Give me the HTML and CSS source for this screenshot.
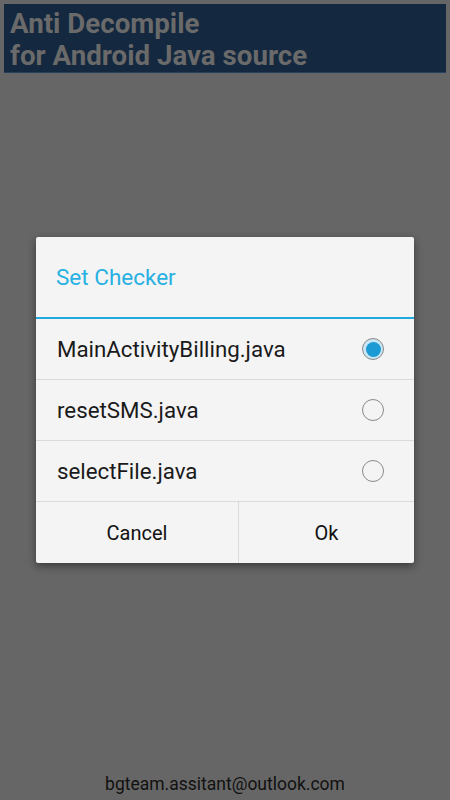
FILE: index.html
```html
<!DOCTYPE html>
<html lang="en">
<head>
    <meta charset="UTF-8">
    <title>Anti Decompile</title>
    <link rel="stylesheet" href="styles.css">
</head>
<body>
    <div class="page">
        <div class="header">
            <div class="header-title">Anti Decompile<br>for Android Java source</div>
        </div>

        <div class="dialog">
            <div class="dialog-title">Set Checker</div>
            <div class="option">
                <span class="option-label">MainActivityBilling.java</span>
                <span class="radio checked"><span class="dot"></span></span>
            </div>
            <div class="option">
                <span class="option-label">resetSMS.java</span>
                <span class="radio"></span>
            </div>
            <div class="option">
                <span class="option-label">selectFile.java</span>
                <span class="radio"></span>
            </div>
            <div class="buttons">
                <button class="btn btn-cancel">Cancel</button>
                <button class="btn btn-ok">Ok</button>
            </div>
        </div>

        <div class="footer">bgteam.assitant@outlook.com</div>
    </div>
</body>
</html>
```

FILE: styles.css
```css
body {
    margin: 0;
    background: #666666;
    font-family: Roboto, 'Liberation Sans', sans-serif;
}

.page {
    height: 800px;
    display: flex;
    flex-direction: column;
    align-items: center;
}

.header {
    align-self: stretch;
    margin: 4px 4px 0;
    height: 69px;
    background: #14283f;
    border-bottom: 1px solid #24405e;
    box-sizing: border-box;
    padding: 4px 0 0 6px;
}

.header-title {
    color: #6a6a6a;
    font-weight: bold;
    font-size: 27.7px;
    line-height: 32px;
}

.dialog {
    margin-top: 164px;
    width: 378px;
    background: #f4f4f4;
    border-radius: 2px;
    box-shadow: 0 3px 8px rgba(0, 0, 0, 0.45);
}

.dialog-title {
    height: 82px;
    box-sizing: border-box;
    padding: 27px 20px 0;
    color: #28b0e3;
    font-size: 22.5px;
    border-bottom: 2px solid #1fa9dd;
}

.option {
    height: 61px;
    display: flex;
    align-items: center;
    justify-content: space-between;
    padding: 0 30px 0 21px;
    border-bottom: 1px solid #dadada;
    box-sizing: border-box;
}

.option-label {
    font-size: 22.3px;
    color: #1a1a1a;
}

.radio {
    width: 22px;
    height: 22px;
    border: 1.3px solid #8a8a8a;
    border-radius: 50%;
    box-sizing: border-box;
    display: flex;
    align-items: center;
    justify-content: center;
}

.radio.checked {
    background: #c8e6f3;
}

.dot {
    width: 15px;
    height: 15px;
    border-radius: 50%;
    background: #1c9ad4;
}

.buttons {
    display: flex;
    height: 61px;
}

.btn {
    border: none;
    background: none;
    font-family: inherit;
    font-size: 20px;
    color: #111;
    padding: 0;
}

.btn-cancel {
    width: 202px;
}

.btn-ok {
    flex: 1;
    border-left: 1px solid #dadada;
}

.footer {
    margin-top: auto;
    margin-bottom: 6px;
    font-size: 17.5px;
    color: #111;
}
```
